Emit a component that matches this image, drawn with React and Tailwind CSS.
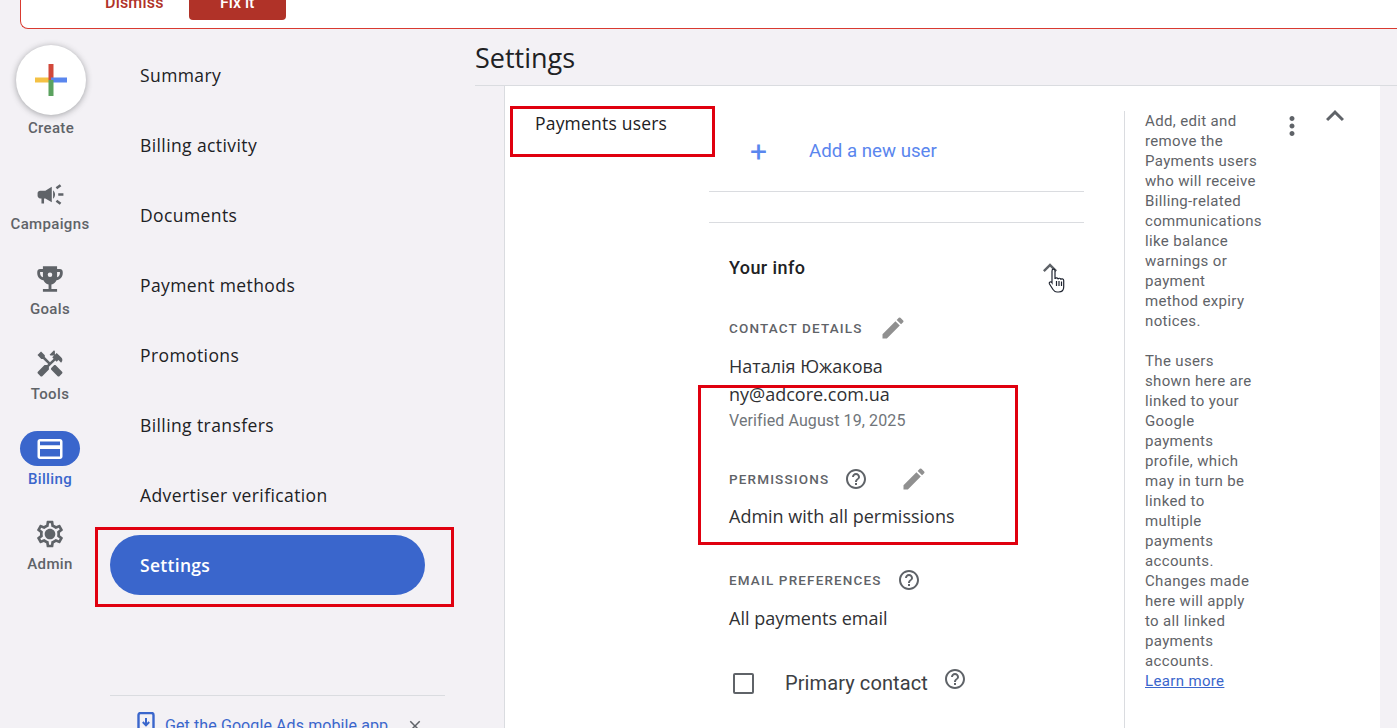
import React from 'react';
import { MdEdit, MdHelpOutline, MdHandyman, MdOutlineSettings, MdClose, MdMoreVert, MdKeyboardArrowUp } from 'react-icons/md';

const navItems = ['Summary', 'Billing activity', 'Documents', 'Payment methods', 'Promotions', 'Billing transfers', 'Advertiser verification'];

const helpOne = ['Add, edit and', 'remove the', 'Payments users', 'who will receive', 'Billing-related', 'communications', 'like balance', 'warnings or', 'payment', 'method expiry', 'notices.'];
const helpTwo = ['The users', 'shown here are', 'linked to your', 'Google', 'payments', 'profile, which', 'may in turn be', 'linked to', 'multiple', 'payments', 'accounts.', 'Changes made', 'here will apply', 'to all linked', 'payments', 'accounts.'];

const CampaignIcon = () => (
  <svg width="31" height="31" viewBox="0 0 24 24" fill="#5f6368">
    <path d="M18 11v2h4v-2h-4zm-2 6.61c.96.71 2.21 1.65 3.2 2.39.4-.53.8-1.07 1.2-1.6-.99-.74-2.24-1.68-3.2-2.4-.4.54-.8 1.08-1.2 1.61zM20.4 5.6c-.4-.53-.8-1.07-1.2-1.6-.99.74-2.24 1.68-3.2 2.4.4.53.8 1.07 1.2 1.6.96-.72 2.21-1.65 3.2-2.4zM4 9c-1.1 0-2 .9-2 2v2c0 1.1.9 2 2 2h1v4h2v-4h1l5 3V6L8 9H4zm11.5 3c0-1.33-.58-2.53-1.5-3.35v6.69c.92-.81 1.5-2.01 1.5-3.34z" />
  </svg>
);

const GoalIcon = () => (
  <svg width="34" height="34" viewBox="0 0 24 24" fill="#5f6368">
    <path d="M19 5h-2V3H7v2H5c-1.1 0-2 .9-2 2v1c0 2.55 1.92 4.63 4.39 4.94.63 1.5 1.98 2.63 3.61 2.96V19H7v2h10v-2h-4v-3.1c1.63-.33 2.98-1.46 3.61-2.96C19.08 12.63 21 10.55 21 8V7c0-1.1-.9-2-2-2zM5 8V7h2v3.82C5.84 10.4 5 9.3 5 8zm14 0c0 1.3-.84 2.4-2 2.82V7h2v1z" />
    <circle cx="12" cy="9" r="1.6" fill="#f3f1f5" />
  </svg>
);

const AdminIcon = () => (
  <span className="relative flex h-[32px] w-[32px] items-center justify-center">
    <MdOutlineSettings size={32} color="#5f6368" />
    <span className="absolute h-[8px] w-[8px] rounded-full bg-[#5f6368]" />
  </span>
);

const CardIcon = () => (
  <svg width="30" height="30" viewBox="0 0 24 24" fill="#fff">
    <path d="M20 4H4c-1.11 0-2 .89-2 2v12c0 1.11.89 2 2 2h16c1.11 0 2-.89 2-2V6c0-1.11-.89-2-2-2zm0 14H4v-6h16v6zm0-9H4V6h16v3z" />
  </svg>
);

const RailLabel = ({ children, color = 'text-[#5f6368]' }) => (
  <div className={`text-[15px] leading-[20px] font-medium tracking-[0.35px] ${color}`}>{children}</div>
);

const RailItem = ({ icon, label }) => (
  <div className="flex h-[85px] flex-col items-center pt-[19px]">
    <div className="flex h-[32px] items-center justify-center">{icon}</div>
    <div className="mt-[4px]"><RailLabel>{label}</RailLabel></div>
  </div>
);

const Help = ({ size = 24 }) => <MdHelpOutline size={size} color="#5f6368" />;

const Rail = () => (
  <div className="flex w-[100px] shrink-0 flex-col">
    <div className="flex w-[102px] flex-col items-center pt-[16px]">
      <div className="flex h-[70px] w-[70px] items-center justify-center rounded-full bg-white shadow-[0_1px_6px_rgba(60,64,67,0.45)]">
        <svg width="32" height="32" viewBox="0 0 32 32">
          <rect x="0" y="13.5" width="16" height="5" fill="#f4c144" />
          <rect x="13.5" y="0" width="5" height="16" fill="#d2483a" />
          <rect x="16" y="13.5" width="16" height="5" fill="#5a86ee" />
          <rect x="13.5" y="16" width="5" height="16" fill="#5ba25f" />
        </svg>
      </div>
      <div className="mt-[3px]"><RailLabel>Create</RailLabel></div>
    </div>
    <div className="pt-[21px]">
      <RailItem icon={<CampaignIcon />} label="Campaigns" />
      <RailItem icon={<GoalIcon />} label="Goals" />
      <RailItem icon={<MdHandyman size={30} color="#5f6368" />} label="Tools" />
      <div className="flex h-[85px] flex-col items-center pt-[17px]">
        <div className="flex h-[35px] w-[60px] items-center justify-center rounded-full bg-[#3a66cc]">
          <CardIcon />
        </div>
        <div className="mt-[3px]"><RailLabel color="text-[#3a66cc]">Billing</RailLabel></div>
      </div>
      <RailItem icon={<AdminIcon />} label="Admin" />
    </div>
  </div>
);

const BillingNav = () => (
  <div className="relative flex w-[375px] shrink-0 flex-col pt-[11px] pl-[10px] font-['Open_Sans',sans-serif]">
    {navItems.map((item) => (
      <div key={item} className="flex h-[70px] items-center pl-[30px] text-[17.5px] font-medium tracking-[0.4px] text-[#202124]">
        {item}
      </div>
    ))}
    <div className="my-[5px] flex h-[60px] w-[315px] items-center rounded-full bg-[#3a66cc] pl-[30px] text-[17.5px] font-semibold tracking-[0.3px] text-white">
      Settings
    </div>
    <div className="mt-[95px] w-[335px] border-t border-[#dadce0] pt-[18px]">
      <div className="flex items-center pl-[27px] font-['Roboto',sans-serif] text-[16px] leading-[24px] tracking-[0.1px] text-[#3a66cc]">
        <svg className="-mt-[4px]" width="18" height="24" viewBox="0 0 18 24" fill="none">
          <rect x="1.5" y="1" width="15" height="24" rx="2" stroke="#3a66cc" strokeWidth="2.4" />
          <path d="M9 6v7M5.800 10L9 13.400 12.200 10" stroke="#3a66cc" strokeWidth="2" />
        </svg>
        <span className="ml-[10px]">Get the Google Ads mobile app</span>
        <MdClose className="ml-[18px]" size={18} color="#5f6368" />
      </div>
    </div>
  </div>
);

const Label = ({ children }) => (
  <span className="text-[13.5px] leading-[20px] font-medium tracking-[1.15px] text-[#5f6368]">{children}</span>
);

const valueText = "font-['Open_Sans',sans-serif] text-[18px] leading-[28px] font-medium text-[#303134]";

const Main = () => (
  <div className="flex min-w-0 flex-1 flex-col">
    <div className="flex h-[57px] items-center border-b border-[#dadce0] pt-[2px] font-['Open_Sans',sans-serif] text-[27px] text-[#202124]">
      Settings
    </div>
    <div className="ml-[29px] mr-[17px] flex h-[700px] border-l border-[#dadce0] bg-white">
      <div className="w-[204px] shrink-0 pt-[25px] pl-[30px] font-['Open_Sans',sans-serif] text-[17.5px] leading-[24px] font-medium tracking-[0.2px] text-[#202124]">
        Payments users
      </div>
      <div className="w-[375px] shrink-0">
        <div className="flex h-[106px] items-center border-b border-[#dadce0] pt-[26px] pl-[41px] font-['Roboto',sans-serif] text-[18.7px] text-[#5a86ee]">
          <span className="text-[30px] leading-[30px]">+</span>
          <span className="ml-[42px]">Add a new user</span>
        </div>
        <div className="mt-[30px] border-t border-[#dadce0] pl-[20px]">
          <div className="flex h-[90px] items-center pr-[20px]">
            <span className="mb-[2px] flex-1 text-[18px] font-medium tracking-[0.4px] text-[#202124]">Your info</span>
            <MdKeyboardArrowUp size={28} color="#5f6368" />
          </div>
          <div className="flex h-[30px] items-center">
            <Label>CONTACT DETAILS</Label>
            <MdEdit className="ml-[16px]" size={28} color="#909090" />
          </div>
          <div className={`mt-[9px] ${valueText}`}>
            <div>Наталія Южакова</div>
            <div>ny@adcore.com.ua</div>
          </div>
          <div className="mt-[1px] text-[16px] leading-[24px] tracking-[0.1px] text-[#70757a]">Verified August 19, 2025</div>
          <div className="mt-[31px] flex h-[30px] items-center">
            <Label>PERMISSIONS</Label>
            <span className="ml-[15px] flex"><Help /></span>
            <MdEdit className="ml-[32px]" size={28} color="#909090" />
          </div>
          <div className={`mt-[8px] ${valueText}`}>Admin with all permissions</div>
          <div className="mt-[35px] flex h-[30px] items-center">
            <Label>EMAIL PREFERENCES</Label>
            <span className="ml-[15px] flex"><Help /></span>
          </div>
          <div className={`mt-[9px] ${valueText}`}>All payments email</div>
          <div className="mt-[35px] flex items-center pl-[4px]">
            <span className="mt-[2px] h-[21px] w-[21px] rounded-[2px] border-2 border-[#5f6368]" />
            <span className="ml-[31px] text-[20px] leading-[28px] tracking-[0.1px] text-[#3c4043]">Primary contact</span>
            <span className="mb-[7px] ml-[15px] flex"><Help /></span>
          </div>
        </div>
      </div>
      <div className="ml-[40px] mt-[25px] flex-1 border-l border-[#dadce0]">
        <div className="flex">
          <div className="ml-[20px] w-[130px] text-[15px] leading-[20px] tracking-[0.35px] text-[#5f6368]">
            {helpOne.map((line, i) => <div key={i}>{line}</div>)}
            <div className="h-[20px]" />
            {helpTwo.map((line, i) => <div key={i}>{line}</div>)}
            <div className="text-[#3a66cc] underline">Learn more</div>
          </div>
          <MdMoreVert className="ml-[2px]" size={30} color="#5f6368" />
          <MdKeyboardArrowUp className="ml-[10px] -mt-[13px]" size={36} color="#5f6368" />
        </div>
      </div>
    </div>
  </div>
);

const Annotation = ({ className }) => <div className={`absolute border-[3px] border-[#e0000f] ${className}`} />;

export default function App() {
  return (
    <div className="relative h-[728px] w-full overflow-hidden bg-[#f3f1f5] font-['Roboto',sans-serif]">
      <div className="ml-[20px] flex h-[29px] items-end overflow-hidden rounded-bl-[8px] border-b border-l border-[#d93a30] bg-white pl-[84px]">
        <span className="mb-[15px] text-[16px] leading-[20px] font-medium tracking-[0.2px] text-[#b03228]">Dismiss</span>
        <div className="mb-[8px] ml-[25px] flex h-[30px] w-[97px] items-end justify-center rounded-[4px] bg-[#b03228] pb-[7px] text-[16px] leading-[20px] font-medium text-white">Fix it</div>
      </div>
      <div className="flex">
        <Rail />
        <BillingNav />
        <Main />
      </div>

      {/* red boxes drawn over the screenshot */}
      <Annotation className="left-[95px] top-[527px] h-[80px] w-[359px]" />
      <Annotation className="left-[510px] top-[106px] h-[51px] w-[205px]" />
      <Annotation className="left-[698px] top-[385px] h-[160px] w-[320px]" />

      {/* mouse cursor */}
      <svg className="absolute left-[1048px] top-[268px]" width="18" height="28" viewBox="0 0 18 28" fill="#fff" stroke="#1f2430" strokeWidth="1.2">
        <path d="M4 3c0-2.400 3-2.400 3 0v8c.2-1.600 3-1.600 3 .3 .2-1.500 2.800-1.400 2.800.4 .3-1.200 2.900-1.100 2.900.9v6.400c0 3-2 5-5 5H9c-2 0-3-1-4-2.500L1.500 16c-1-2 1.500-3 2.500-1.200z" />
        <path d="M8.500 13v5M11 13v5M13.500 13.500v4.500" fill="none" />
      </svg>
    </div>
  );
}
